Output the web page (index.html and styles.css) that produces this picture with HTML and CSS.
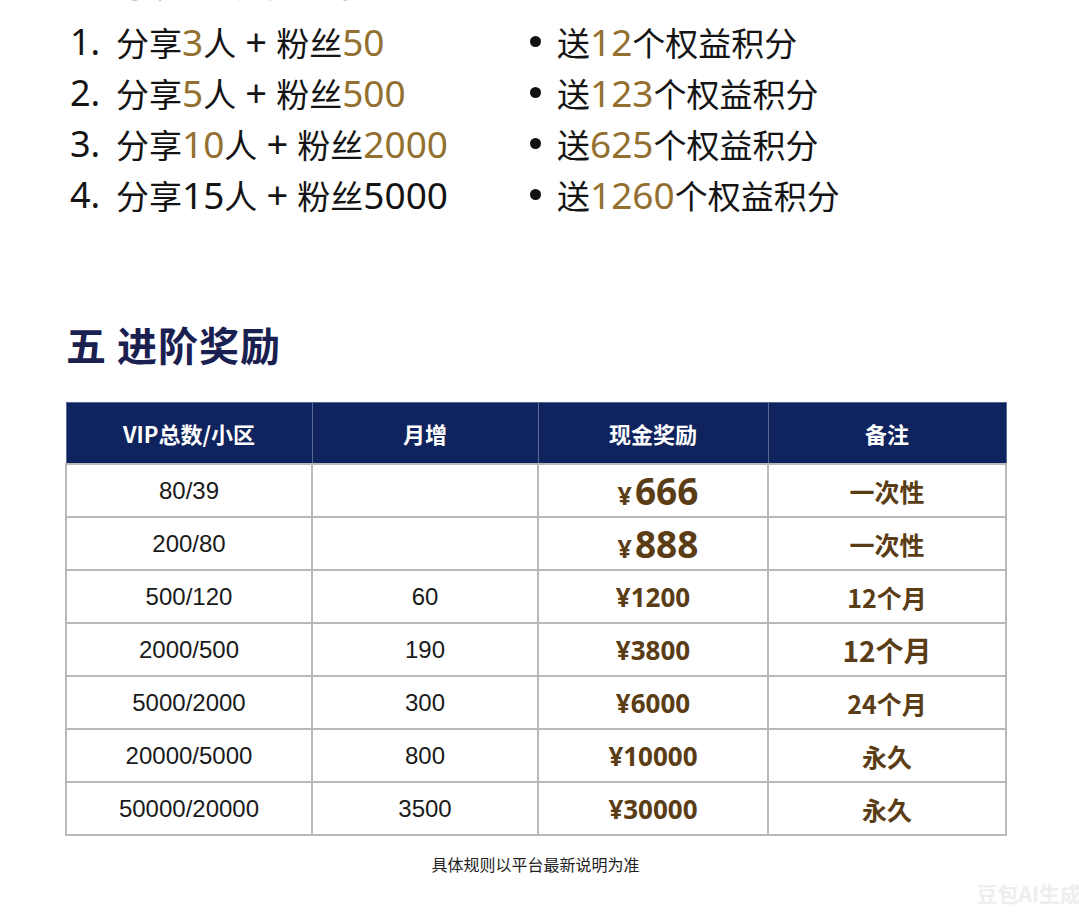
FILE: index.html
```html
<!DOCTYPE html>
<html lang="zh-CN">
<head>
<meta charset="utf-8">
<title>进阶奖励</title>
<link rel="stylesheet" href="styles.css">
</head>
<body>
<div class="page">
  <h2 class="cut-heading">四 推广裂变奖励</h2>
  <div class="lists">
    <div class="list">
      <div class="item"><span class="num">1.</span><span>分享<span class="d gold">3</span>人<span class="plus">+</span>粉丝<span class="d gold">50</span></span></div>
      <div class="item"><span class="num">2.</span><span>分享<span class="d gold">5</span>人<span class="plus">+</span>粉丝<span class="d gold">500</span></span></div>
      <div class="item"><span class="num">3.</span><span>分享<span class="d gold">10</span>人<span class="plus">+</span>粉丝<span class="d gold">2000</span></span></div>
      <div class="item"><span class="num">4.</span><span>分享<span class="d">15</span>人<span class="plus">+</span>粉丝<span class="d">5000</span></span></div>
    </div>
    <div class="list">
      <div class="item"><span class="dot"></span><span>送<span class="d gold">12</span>个权益积分</span></div>
      <div class="item"><span class="dot"></span><span>送<span class="d gold">123</span>个权益积分</span></div>
      <div class="item"><span class="dot"></span><span>送<span class="d gold">625</span>个权益积分</span></div>
      <div class="item"><span class="dot"></span><span>送<span class="d gold">1260</span>个权益积分</span></div>
    </div>
  </div>

  <h2 class="section-title">五 进阶奖励</h2>

  <table class="reward">
    <thead>
      <tr><th class="c1">VIP总数/小区</th><th class="c2">月增</th><th class="c3">现金奖励</th><th class="c4">备注</th></tr>
    </thead>
    <tbody>
      <tr><td>80/39</td><td></td><td class="cash big"><span class="yen">¥</span>666</td><td class="note">一次性</td></tr>
      <tr><td>200/80</td><td></td><td class="cash big"><span class="yen">¥</span>888</td><td class="note">一次性</td></tr>
      <tr><td>500/120</td><td>60</td><td class="cash">¥1200</td><td class="note">12个月</td></tr>
      <tr><td>2000/500</td><td>190</td><td class="cash">¥3800</td><td class="note strong">12个月</td></tr>
      <tr><td>5000/2000</td><td>300</td><td class="cash">¥6000</td><td class="note">24个月</td></tr>
      <tr><td>20000/5000</td><td>800</td><td class="cash">¥10000</td><td class="note">永久</td></tr>
      <tr><td>50000/20000</td><td>3500</td><td class="cash">¥30000</td><td class="note">永久</td></tr>
    </tbody>
  </table>

  <p class="footnote">具体规则以平台最新说明为准</p>
  <div class="watermark">豆包AI生成</div>
</div>
</body>
</html>
```

FILE: styles.css
```css
html, body {
  margin: 0;
  padding: 0;
  background: #ffffff;
}

.page {
  position: relative;
  width: 1079px;
  height: 916px;
  overflow: hidden;
  font-family: "Noto Sans CJK SC", "Noto Sans", sans-serif;
  color: #141414;
}

.cut-heading {
  margin: -45px 0 0 66px;
  height: 48px;
  font-size: 40px;
  line-height: 48px;
  font-weight: 700;
  color: #1b2250;
}

.lists {
  display: grid;
  grid-template-columns: 460px 1fr;
  margin: 13px 0 0 70px;
}

.list {
  display: flex;
  flex-direction: column;
}

.item {
  display: flex;
  align-items: center;
  height: 51px;
  font-size: 33px;
  line-height: 51px;
  white-space: nowrap;
}

.num {
  width: 46px;
  font-family: "Noto Sans", sans-serif;
  font-size: 36px;
}

.d {
  font-family: "Noto Sans", sans-serif;
  font-size: 37px;
}

.plus {
  display: inline-block;
  width: 40px;
  text-align: center;
  font-family: "Noto Sans", sans-serif;
  font-size: 38px;
}

.dot {
  width: 11px;
  height: 11px;
  border-radius: 50%;
  background: #111;
  margin: 0 16px 0 0;
}

.gold {
  color: #93702f;
}

.section-title {
  margin: 100px 0 0 66px;
  font-size: 40px;
  line-height: 48px;
  font-weight: 700;
  color: #1a2150;
  letter-spacing: 1px;
}

.reward {
  margin: 34px 0 0 65px;
  width: 936px;
  border-collapse: collapse;
  table-layout: fixed;
}

.reward th {
  height: 60px;
  background: #0f245e;
  color: #ffffff;
  font-size: 22px;
  font-weight: 700;
  border: 1px solid #5a6a94;
  padding: 0;
}

.c1 { width: 245px; }
.c2 { width: 225px; }
.c3 { width: 229px; }
.c4 { width: 237px; }

.reward td {
  height: 51px;
  border: 2px solid #b9b9b9;
  text-align: center;
  padding: 0;
  font-family: "Liberation Sans", Arial, sans-serif;
  font-size: 24px;
  color: #1a1a1a;
}

.reward td.cash {
  font-family: "Open Sans", "Noto Sans CJK SC", sans-serif;
  font-weight: 700;
  font-size: 26px;
  color: #5a3c15;
}

.reward td.cash.big {
  font-size: 37px;
  padding-left: 10px;
}

.yen {
  font-size: 25px;
  margin-right: 3px;
}

.reward td.note {
  font-family: "Noto Sans CJK SC", sans-serif;
  font-weight: 700;
  font-size: 25px;
  color: #5a3c15;
}

.reward td.note.strong {
  font-size: 28px;
}

.footnote {
  margin: 16px 0 0;
  text-align: center;
  font-size: 16px;
  line-height: 24px;
  color: #222;
  padding-right: 8px;
}

.watermark {
  position: absolute;
  right: -2px;
  bottom: 8px;
  font-size: 21px;
  font-weight: 700;
  color: #eeeeee;
}
```
